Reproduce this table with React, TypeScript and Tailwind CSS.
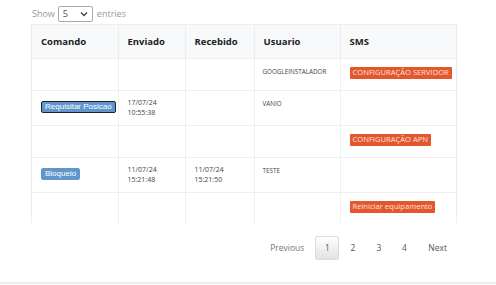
import React from "react";

const rows = [
  { cmd: "", env: [], rec: [], user: "GOOGLEINSTALADOR", sms: "CONFIGURAÇÃO SERVIDOR", h: "h-[32px]" },
  { cmd: "Requisitar Posicao", focus: true, env: ["17/07/24", "10:55:38"], rec: [], user: "VANIO", sms: "", h: "h-[35px]" },
  { cmd: "", env: [], rec: [], user: "", sms: "CONFIGURAÇÃO APN", h: "h-[32px]" },
  { cmd: "Bloqueio", env: ["11/07/24", "15:21:48"], rec: ["11/07/24", "15:21:50"], user: "TESTE", sms: "", h: "h-[35px]" },
  { cmd: "", env: [], rec: [], user: "", sms: "Reiniciar equipamento", h: "h-[35px]" },
];

function Stamp({ lines }: { lines: string[] }) {
  return (
    <div className="flex flex-col text-[7px] leading-[10px] text-[#444]">
      {lines.map((l) => <span key={l}>{l}</span>)}
    </div>
  );
}

export default function App() {
  return (
    <div className="w-[496px] h-[285px] bg-white flex flex-col font-['Open_Sans',sans-serif] overflow-hidden">
      <div className="flex items-center gap-[3px] pl-[32px] pt-[6px] h-[22px] text-[9px] text-[#999]">
        <span>Show</span>
        <div className="w-[35px] h-[16px] border border-[#aaa] rounded-[2px] flex items-center justify-between px-[4px] text-[#555] text-[9px]">
          <span>5</span>
          <svg width="8" height="6" viewBox="0 0 8 6"><path d="M1 1.5 L4 4.5 L7 1.5" fill="none" stroke="#444" strokeWidth="1.4" /></svg>
        </div>
        <span className="ml-[1px]">entries</span>
      </div>
      <div className="ml-[31px] mt-[2px] w-[426px] h-[199px] overflow-hidden border-t border-x border-[#ebedef]">
        <table className="w-full border-collapse table-fixed leading-none">
          <colgroup>
            <col className="w-[86px]" />
            <col className="w-[67px]" />
            <col className="w-[69px]" />
            <col className="w-[86px]" />
            <col className="w-[118px]" />
          </colgroup>
          <thead>
            <tr className="h-[33px] bg-[#f8f9fa]">
              {["Comando", "Enviado", "Recebido", "Usuario", "SMS"].map((h, i) => (
                <th key={h} className={`text-left align-middle pl-[9px] text-[9.5px] font-bold text-[#222] border-b border-[#ebedef] ${i ? "border-l" : ""}`}>{h}</th>
              ))}
            </tr>
          </thead>
          <tbody>
            {rows.map((r, i) => (
              <tr key={i} className={`${r.h} border-b border-[#eeeff1]`}>
                <td className="align-top p-0 pl-[9px] pt-[10px]">
                  {r.cmd && (
                    <div className="flex">
                      <div className={`h-[12px] flex items-center px-[3px] rounded-[2px] bg-[#6196cc] text-white text-[8px] font-['Liberation_Sans',sans-serif] ${r.focus ? "border border-[#1c2430]" : "border border-[#6196cc]"}`}>{r.cmd}</div>
                    </div>
                  )}
                </td>
                <td className="align-top p-0 pl-[9px] pt-[7px] border-l border-[#eeeff1]"><Stamp lines={r.env} /></td>
                <td className="align-top p-0 pl-[9px] pt-[7px] border-l border-[#eeeff1]"><Stamp lines={r.rec} /></td>
                <td className="align-top p-0 pl-[8px] pt-[9px] border-l border-[#eeeff1] text-[6.3px] leading-[8px] text-[#444]">{r.user}</td>
                <td className="align-top p-0 pl-[9px] pt-[8px] border-l border-[#eeeff1]">
                  {r.sms && (
                    <div className="flex">
                      <div className="h-[12px] flex items-center px-[3px] rounded-[1px] bg-[#e4572e] text-[#fbe3dc] text-[7.6px]">{r.sms}</div>
                    </div>
                  )}
                </td>
              </tr>
            ))}
          </tbody>
        </table>
      </div>
      <div className="flex items-center justify-end pr-[38px] mt-[13px] h-[24px] text-[8.5px] text-[#555]">
        <span className="px-[11px] text-[#777]">Previous</span>
        <span className="w-[24px] h-[24px] flex items-center justify-center border border-[#dcdcdc] rounded-[2px] bg-gradient-to-b from-white to-[#e2e2e2] text-[#555]">1</span>
        <span className="w-[27px] text-center">2</span>
        <span className="w-[25px] text-center">3</span>
        <span className="w-[26px] text-center">4</span>
        <span className="px-[11px] text-[#555]">Next</span>
      </div>
      <div className="mt-auto h-[2px] bg-[#ececec] mb-[1px]" />
    </div>
  );
}
